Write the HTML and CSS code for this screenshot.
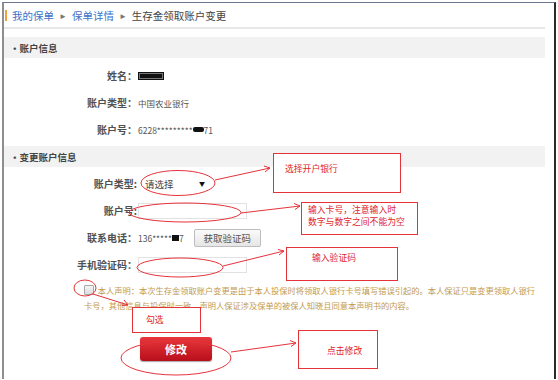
FILE: index.html
```html
<!DOCTYPE html>
<html lang="zh-CN">
<head>
<meta charset="utf-8">
<title>生存金领取账户变更</title>
<link rel="stylesheet" href="styles.css">
</head>
<body>
<div class="frame">
  <div class="crumb">
    <span class="crumb-bar"></span>
    <a class="crumb-link">我的保单</a>
    <span class="crumb-arrow">►</span>
    <a class="crumb-link">保单详情</a>
    <span class="crumb-arrow">►</span>
    <span class="crumb-current">生存金领取账户变更</span>
  </div>
  <div class="rule"></div>

  <div class="sec-head">•账户信息</div>
  <div class="rows rows-info">
    <div class="row"><span class="label">姓名：</span><span class="value"><span class="redact redact-name"></span></span></div>
    <div class="row"><span class="label">账户类型：</span><span class="value">中国农业银行</span></div>
    <div class="row"><span class="label">账户号：</span><span class="value">6228*********<span class="redact redact-num"></span>71</span></div>
  </div>

  <div class="sec-head sec-head-2">•变更账户信息</div>
  <div class="rows rows-edit">
    <div class="row"><span class="label">账户类型:</span><span class="value"><span class="select">请选择<span class="caret">▼</span></span></span></div>
    <div class="row"><span class="label">账户号:</span><span class="value"><span class="input"></span></span></div>
    <div class="row"><span class="label">联系电话：</span><span class="value">136*****<span class="redact redact-phone"></span>7<span class="btn-code">获取验证码</span></span></div>
    <div class="row"><span class="label">手机验证码：</span><span class="value"><span class="input"></span></span></div>
  </div>

  <p class="statement"><span class="checkbox"></span> 本人声明：本次生存金领取账户变更是由于本人投保时将领取人银行卡号填写错误引起的。本人保证只是变更领取人银行<br>卡号，其他信息与投保时一致。声明人保证涉及保单的被保人知晓且同意本声明书的内容。</p>

  <div class="actions"><span class="btn-submit">修改</span></div>
</div>

<svg class="marks" width="558" height="380" viewBox="0 0 558 380">
  <g fill="none" stroke="#e5333a" stroke-width="1">
    <ellipse cx="178" cy="183" rx="37" ry="12.5"/>
    <ellipse cx="185" cy="212.5" rx="56" ry="9.5"/>
    <ellipse cx="180" cy="267.5" rx="43" ry="9.5"/>
    <ellipse cx="85" cy="288" rx="11" ry="8"/>
    <ellipse cx="176" cy="358" rx="55" ry="17"/>
    <path d="M215 180 L270 168 M264 166 L270 168 L265 172"/>
    <path d="M241 213 L300 206 M294 203.5 L300 206 L295 209.5"/>
    <path d="M223 266 L284 251 M278 249.5 L284 251 L279 255"/>
    <path d="M93 294 L128 305 M122 305.5 L128 305 L124 300"/>
    <path d="M231 352 L296 343 M290 340.5 L296 343 L291 346.5"/>
  </g>
</svg>
<div class="note note-a">选择开户银行</div>
<div class="note note-b">输入卡号，注意输入时<br>数字与数字之间不能为空</div>
<div class="note note-c">输入验证码</div>
<div class="note note-d">勾选</div>
<div class="note note-e">点击修改</div>
</body>
</html>
```

FILE: styles.css
```css
html, body {
  margin: 0;
  padding: 0;
  background: #fff;
}
body {
  width: 558px;
  height: 380px;
  overflow: hidden;
  position: relative;
  font-family: "Noto Sans CJK SC", "Liberation Sans", sans-serif;
  color: #333;
}
.frame {
  margin: 2px 2px 0 2px;
  height: 376px;
  border-left: 2px solid #8e8e8e;
  border-top: 1px solid #6e7690;
  border-right: 2px solid #2a2a2a;
  padding-right: 9px;
}
.crumb {
  height: 24px;
  display: flex;
  align-items: center;
  font-size: 10.5px;
  padding-left: 1px;
  gap: 3px;
}
.crumb-bar {
  width: 2px;
  height: 11px;
  background: #f0a040;
  margin-right: 2px;
}
.crumb-link { color: #3c72c8; }
.crumb-arrow { color: #777; font-size: 8px; margin: 0 2px; }
.crumb-current { color: #444; }
.rule {
  height: 2px;
  background: #e8e8e8;
}
.sec-head {
  margin-top: 8px;
  height: 21px;
  background: #f2f2f2;
  display: flex;
  align-items: center;
  padding-left: 6px;
  font-size: 9.5px;
  font-weight: bold;
  color: #444;
}
.sec-head-2 { margin-top: 3px; }
.rows { display: flex; flex-direction: column; }
.rows-info { padding-top: 4px; }
.rows-edit { padding-top: 3px; }
.row {
  height: 27px;
  display: grid;
  grid-template-columns: 133px 1fr;
  align-items: center;
}
.label {
  text-align: right;
  font-size: 10px;
  font-weight: bold;
  color: #505050;
}
.value {
  font-size: 8.5px;
  color: #555;
  display: flex;
  align-items: center;
  padding-left: 1px;
}
.redact {
  display: inline-block;
  background: #111;
}
.redact-name {
  width: 24px;
  height: 6px;
  border: 1px solid #111;
  box-shadow: inset 0 0 0 1px #777;
}
.redact-num { width: 11px; height: 5px; border-radius: 2px; }
.redact-phone { width: 7px; height: 6px; }
.select {
  width: 68px;
  height: 17px;
  display: flex;
  align-items: center;
  justify-content: space-between;
  padding: 0 4px;
  font-size: 9.5px;
  color: #444;
  box-sizing: border-box;
  margin-left: 3px;
}
.caret { font-size: 6px; color: #111; }
.input {
  width: 109px;
  height: 16px;
  border: 1px solid #e2e2e2;
  box-sizing: border-box;
  background: #fff;
}
.btn-code {
  margin-left: 10px;
  width: 67px;
  height: 18px;
  box-sizing: border-box;
  border: 1px solid #bdbdbd;
  border-radius: 2px;
  background: linear-gradient(#fafafa, #e6e6e6);
  display: flex;
  align-items: center;
  justify-content: center;
  font-size: 9.5px;
  color: #555;
}
.statement {
  margin: 5px 0 0 80px;
  font-size: 8.25px;
  line-height: 15px;
  color: #c39a4e;
  white-space: nowrap;
}
.checkbox {
  display: inline-block;
  width: 8px;
  height: 8px;
  border: 1px solid #a8a8a8;
  background: linear-gradient(#f4f4f4, #dcdcdc);
  border-radius: 1px;
  vertical-align: -1px;
  margin-right: 2px;
}
.actions {
  padding: 24px 0 0 136px;
}
.btn-submit {
  display: flex;
  width: 72px;
  height: 24px;
  align-items: center;
  justify-content: center;
  border-radius: 3px;
  background: linear-gradient(#e8373c, #b80f1b);
  box-shadow: 0 1px 1px rgba(0,0,0,0.35);
  color: #fff;
  font-size: 11px;
  font-weight: bold;
}
.marks {
  position: absolute;
  left: 0;
  top: 0;
  pointer-events: none;
}
.note {
  position: absolute;
  box-sizing: border-box;
  border: 1px solid #e5333a;
  background: #fff;
  color: #e0252b;
  font-size: 8.8px;
  line-height: 11.5px;
}
.note-a { left: 273px; top: 153px; width: 128px; height: 40px; padding: 9px 0 0 11px; }
.note-b { left: 301px; top: 202px; width: 117px; height: 33px; padding: 1px 0 0 6px; }
.note-c { left: 286px; top: 247px; width: 112px; height: 34px; padding: 4px 0 0 25px; }
.note-d { left: 132px; top: 307px; width: 69px; height: 26px; padding: 6px 0 0 13px; }
.note-e { left: 298px; top: 330px; width: 80px; height: 39px; padding: 14px 0 0 28px; }
```
